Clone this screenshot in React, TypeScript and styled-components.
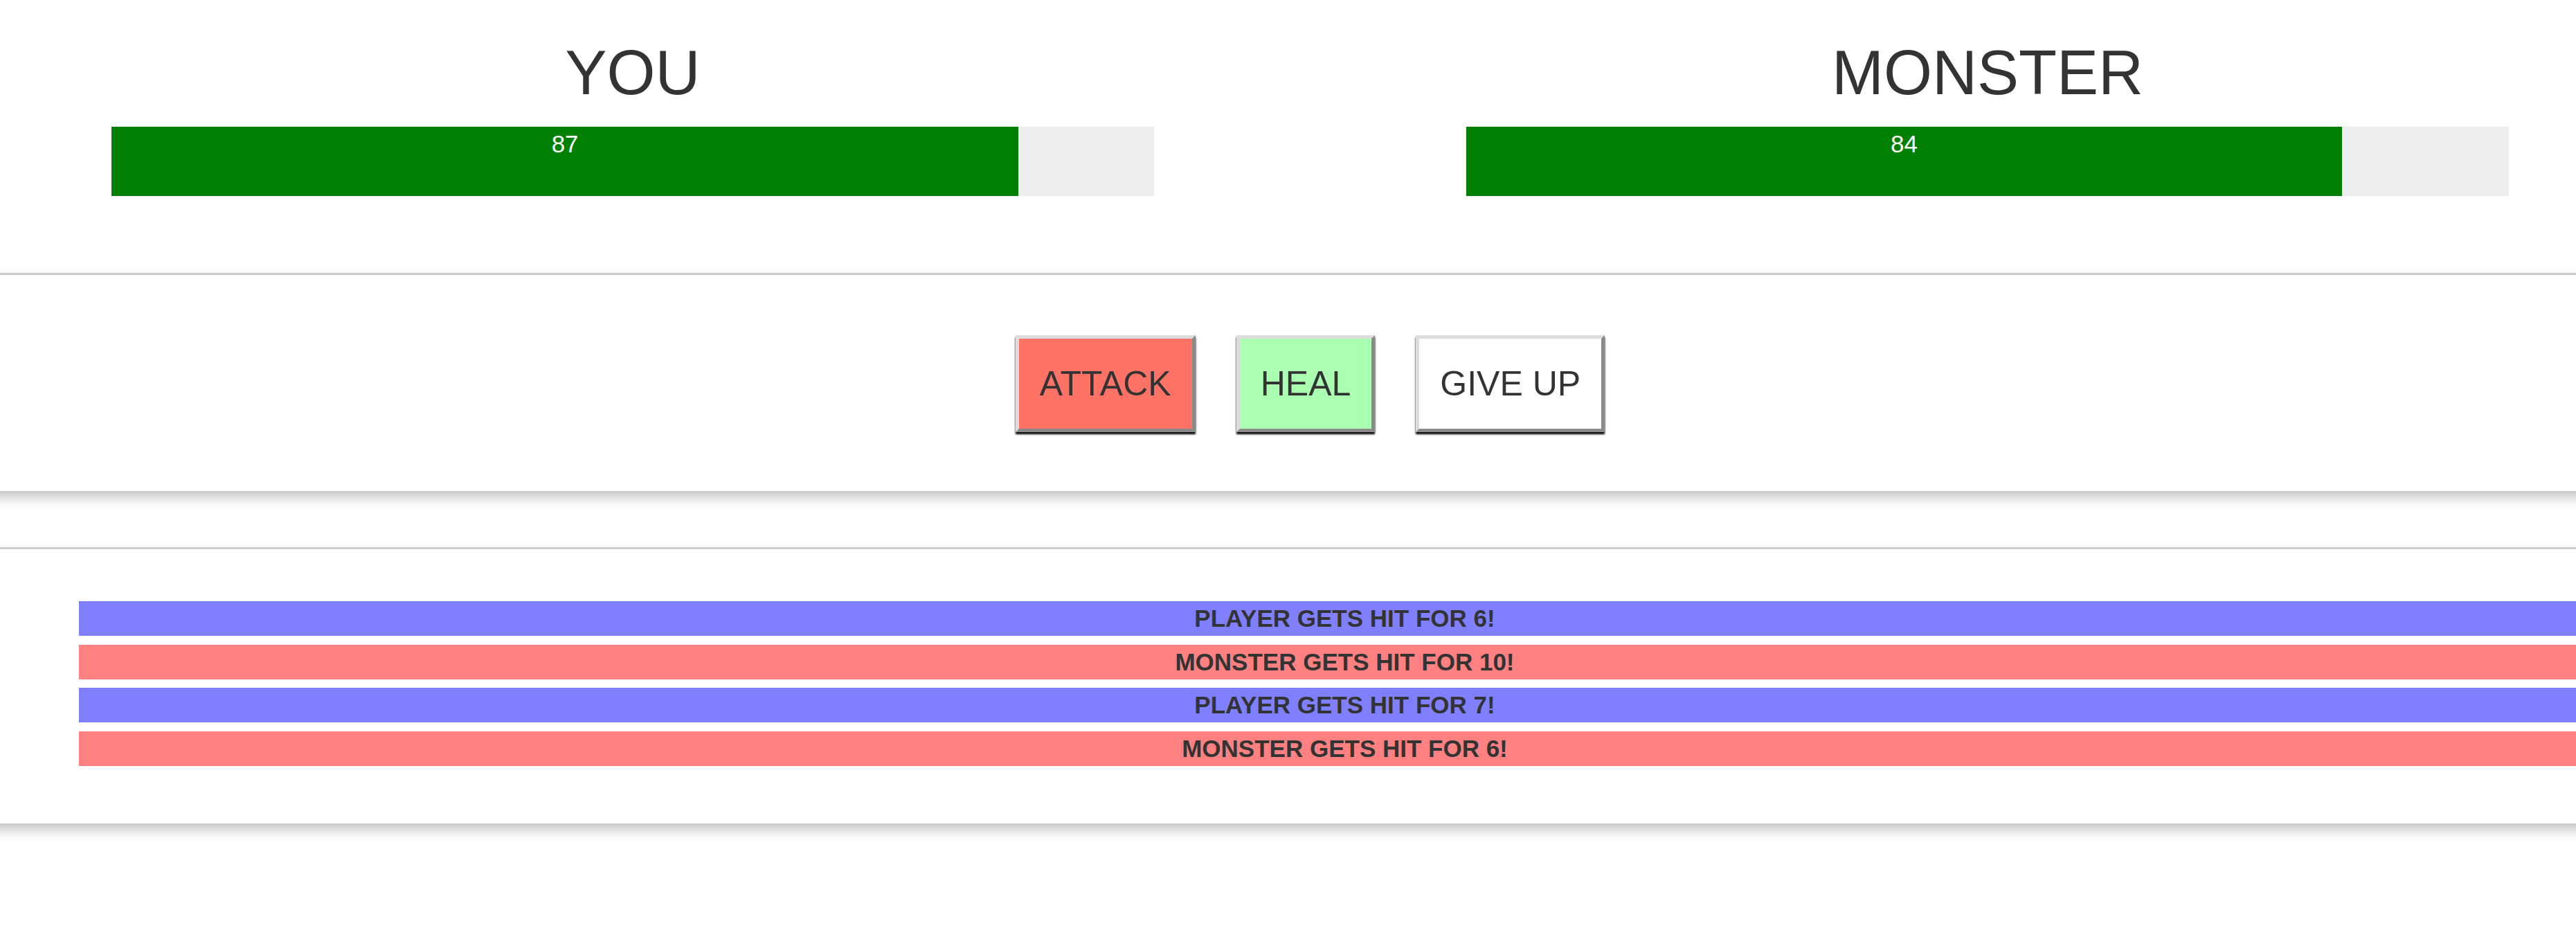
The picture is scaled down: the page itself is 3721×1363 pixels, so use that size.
import React from "react";
import styled, { createGlobalStyle } from "styled-components";

const GlobalStyle = createGlobalStyle`
  html {
    overflow: hidden;
  }
  body {
    margin: 0;
    padding: 0;
    background: #ffffff;
    font-family: "Liberation Sans", Arial, Helvetica, sans-serif;
    color: #333333;
  }
  * { box-sizing: border-box; }
`;

const Page = styled.div`
  width: 3914px;
  margin-left: -64.5px;
  padding-bottom: 60px;
  display: flex;
  flex-direction: column;
`;

const Header = styled.section`
  display: grid;
  grid-template-columns: 1fr 1fr;
  padding-top: 42px;
  padding-bottom: 111px;
`;

const Column = styled.div`
  padding: 0 37.5px;
  display: flex;
  flex-direction: column;
  align-items: center;
`;

const Title = styled.h1`
  margin: 0 0 15px;
  font-size: 90px;
  line-height: 126px;
  font-weight: 400;
  color: #333333;
  text-align: center;
`;

const HealthBar = styled.div`
  width: 80%;
  height: 100px;
  background-color: #eeeeee;
  display: flex;
`;

const HealthFill = styled.div`
  height: 100%;
  background-color: #008000;
  color: #ffffff;
  font-size: 35px;
  line-height: 50px;
  text-align: center;
`;

const Panel = styled.section<{ $padTop: number; $padBottom: number; $marginTop: number }>`
  margin-top: ${(p) => p.$marginTop}px;
  border: 3px solid #cccccc;
  box-shadow: 0 7.5px 15px #cccccc;
  padding: ${(p) => p.$padTop}px 62.5px ${(p) => p.$padBottom}px;
`;

const ButtonRow = styled.div`
  display: flex;
  justify-content: center;
  gap: 59px;
`;

const GameButton = styled.button<{ $bg: string }>`
  font-family: "Liberation Sans", Arial, Helvetica, sans-serif;
  font-size: 50px;
  line-height: 70px;
  color: #333333;
  background-color: ${(p) => p.$bg};
  padding: 30px;
  margin: 0;
  border-style: solid;
  border-width: 5px;
  border-color: #dcdcdc #8a8a8a #8a8a8a #dcdcdc;
  box-shadow: 0 2.5px 2.5px #000000;
  cursor: pointer;
`;

const LogList = styled.ul`
  list-style: none;
  margin: 0;
  padding: 0 0 0 100px;
  display: flex;
  flex-direction: column;
  gap: 12.5px;
`;

const LogItem = styled.li<{ $turn: "player" | "monster" }>`
  margin: 0 12.5px;
  height: 50px;
  line-height: 50px;
  font-size: 35px;
  font-weight: 700;
  text-transform: uppercase;
  text-align: center;
  color: #333333;
  background-color: ${(p) => (p.$turn === "player" ? "#8080ff" : "#ff8080")};
`;

const fighters = [
  { name: "YOU", health: 87 },
  { name: "MONSTER", health: 84 },
];

const turns: { text: string; turn: "player" | "monster" }[] = [
  { text: "Player gets hit for 6!", turn: "player" },
  { text: "Monster gets hit for 10!", turn: "monster" },
  { text: "Player gets hit for 7!", turn: "player" },
  { text: "Monster gets hit for 6!", turn: "monster" },
];

export default function App() {
  return (
    <>
      <GlobalStyle />
      <Page>
        <Header>
          {fighters.map((f) => (
            <Column key={f.name}>
              <Title>{f.name}</Title>
              <HealthBar>
                <HealthFill style={{ width: `${f.health}%` }}>{f.health}</HealthFill>
              </HealthBar>
            </Column>
          ))}
        </Header>
        <Panel $marginTop={0} $padTop={87} $padBottom={85}>
          <ButtonRow>
            <GameButton $bg="#ff7367">ATTACK</GameButton>
            <GameButton $bg="#aaffb0">HEAL</GameButton>
            <GameButton $bg="#ffffff">GIVE UP</GameButton>
          </ButtonRow>
        </Panel>
        <Panel $marginTop={78} $padTop={75} $padBottom={83.5}>
          <LogList>
            {turns.map((t, i) => (
              <LogItem key={i} $turn={t.turn}>
                {t.text}
              </LogItem>
            ))}
          </LogList>
        </Panel>
      </Page>
    </>
  );
}
